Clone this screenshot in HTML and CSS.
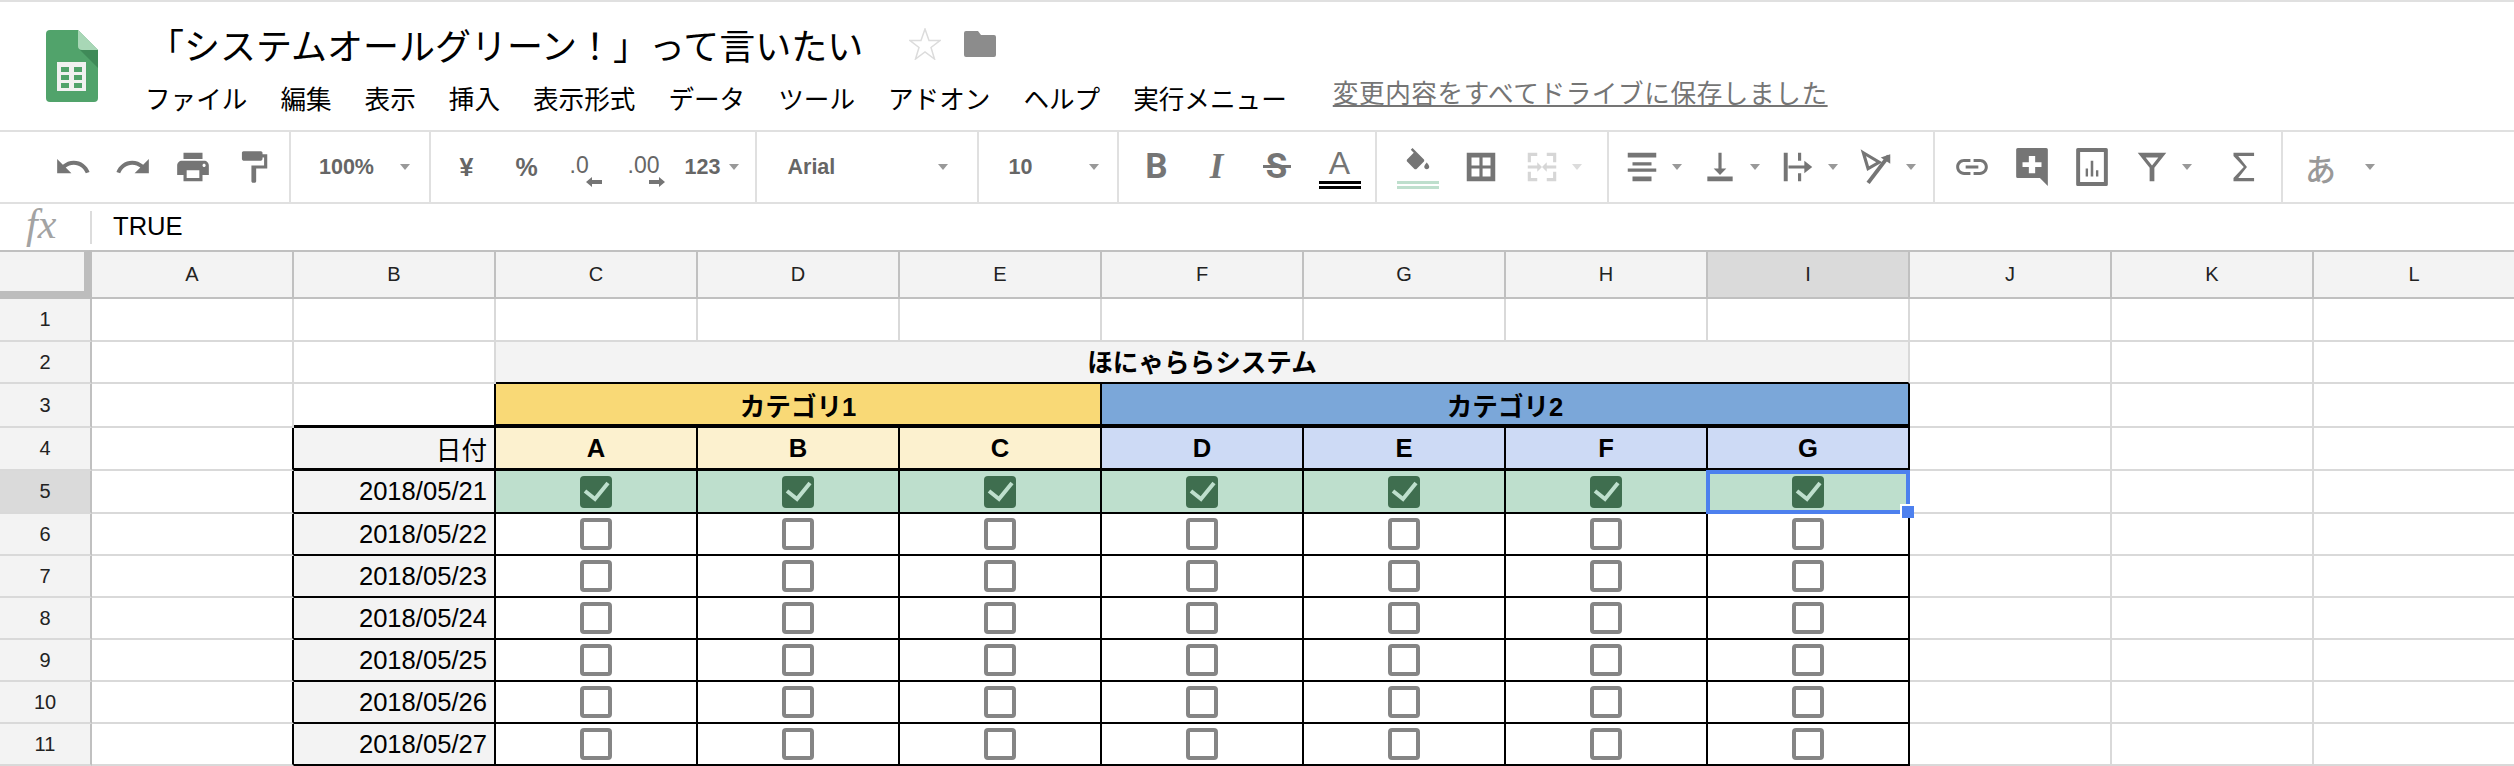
FILE: index.html
```html
<!DOCTYPE html>
<html lang="ja">
<head>
  <meta charset="UTF-8" />
  <title>「システムオールグリーン！」って言いたい</title>
  <link rel="stylesheet" href="styles.css">
</head>
<body>
  <!-- shared checkbox tick -->
  <svg class="defs" width="0" height="0"><symbol id="tick" viewBox="0 0 32 32"><path d="M5 15l10 8L28 7" fill="none" stroke="#bedfcd" stroke-width="4"/></symbol></svg>

  <header class="header">
    <svg class="logo" viewBox="0 0 52 72">
      <path d="M4 0h28l20 20v48a4 4 0 0 1-4 4H4a4 4 0 0 1-4-4V4a4 4 0 0 1 4-4z" fill="#51a36b"/>
      <path d="M32 18l20 20V20z" fill="#3f8a58"/>
      <path d="M32 0l20 20H36a4 4 0 0 1-4-4z" fill="#a8d7b6"/>
      <path d="M11 32h29v29H11z" fill="#f1f1f1"/>
      <path d="M15 37h8v5h-8zM28 37h8v5h-8zM15 45h8v5h-8zM28 45h8v5h-8zM15 53h8v5h-8zM28 53h8v5h-8z" fill="#51a36b"/>
    </svg>
    <div class="header-main">
      <div class="title-row">
        <span class="title">「システムオールグリーン！」って言いたい</span>
        <svg class="star" viewBox="0 0 32 32"><path d="M16 1l4 11.500h11l-9 7 3.500 11.500L16 24l-9.500 7L10 19.500l-9-7h11z" fill="none" stroke="#dcdcdc" stroke-width="1.500"/></svg>
        <svg class="folder" viewBox="0 0 32 26"><path d="M2 0h12l3 4h13a2 2 0 0 1 2 2v18a2 2 0 0 1-2 2H2a2 2 0 0 1-2-2V2a2 2 0 0 1 2-2z" fill="#8c8c8c"/></svg>
      </div>
      <nav class="menu">
        <span>ファイル</span><span>編集</span><span>表示</span><span>挿入</span><span>表示形式</span><span>データ</span><span>ツール</span><span>アドオン</span><span>ヘルプ</span><span>実行メニュー</span>
        <a class="saved">変更内容をすべてドライブに保存しました</a>
      </nav>
    </div>
  </header>

  <div class="toolbar">
    <div class="group g1">
      <svg class="ic" viewBox="0 0 24 24"><path d="M12.500 8c-2.650 0-5.050.99-6.900 2.600L2 7v9h9l-3.620-3.620c1.390-1.160 3.160-1.880 5.120-1.880 3.540 0 6.550 2.310 7.600 5.500l2.370-.78C21.080 11.030 17.150 8 12.500 8z"/></svg>
      <svg class="ic" viewBox="0 0 24 24"><path d="M18.400 10.600C16.550 8.990 14.150 8 11.500 8c-4.650 0-8.580 3.030-9.960 7.220L3.900 16c1.050-3.190 4.050-5.500 7.600-5.500 1.950 0 3.730.72 5.120 1.880L13 16h9V7l-3.600 3.600z"/></svg>
      <svg class="ic" viewBox="0 0 24 24"><path d="M19 8H5c-1.660 0-3 1.340-3 3v6h4v4h12v-4h4v-6c0-1.660-1.340-3-3-3zm-3 11H8v-5h8v5zm3-7c-.55 0-1-.45-1-1s.45-1 1-1 1 .45 1 1-.45 1-1 1zm-1-9H6v4h12V3z"/></svg>
      <svg class="ic" viewBox="0 0 24 24"><path d="M18 4V3c0-.55-.45-1-1-1H6c-.55 0-1 .45-1 1v4c0 .55.45 1 1 1h11c.55 0 1-.45 1-1V6h1v5h-8v10c0 .55.45 1 1 1h1c.55 0 1-.45 1-1v-8h7V4h-3z"/></svg>
    </div>
    <div class="group g2"><span class="tx w-zoom">100%</span><i class="arrow"></i></div>
    <div class="group g3">
      <span class="tx big yen">¥</span>
      <span class="tx big pct">%</span>
      <span class="dec d0"><span class="tx">.0</span><svg viewBox="0 0 16 10"><path d="M0 5l6-5v3h10v4H6v3z"/></svg></span>
      <span class="dec d00"><span class="tx">.00</span><svg viewBox="0 0 16 10"><path d="M16 5l-6-5v3H0v4h10v3z"/></svg></span>
      <span class="tx num">123</span><i class="arrow"></i>
    </div>
    <div class="group g4"><span class="tx w-font">Arial</span><i class="arrow"></i></div>
    <div class="group g5"><span class="tx w-size">10</span><i class="arrow"></i></div>
    <div class="group g6">
      <span class="glyph bold">B</span>
      <span class="glyph ital">I</span>
      <span class="glyph strike">S<i class="strike-bar"></i></span>
      <span class="glyph under"><span class="under-a">A</span><i class="bars"></i></span>
    </div>
    <div class="group g7">
      <span class="glyph under"><svg class="fill-ic" viewBox="0 0 24 24"><path d="M16.560 8.940L7.620 0 6.210 1.410l2.380 2.380-5.150 5.150c-.59.590-.59 1.540 0 2.120l5.500 5.500c.29.29.68.44 1.060.44s.77-.15 1.060-.44l5.500-5.500c.59-.58.59-1.530 0-2.120zM19 11.500s-2 2.170-2 3.500c0 1.100.9 2 2 2s2-.9 2-2c0-1.330-2-3.500-2-3.500z"/></svg><i class="bars green"></i></span>
      <svg class="ic" viewBox="0 0 24 24"><path d="M3 3v18h18V3H3zm8 15H6v-5h5v5zm0-7H6V6h5v5zm7 7h-5v-5h5v5zm0-7h-5V6h5v5z"/></svg>
      <span class="unit">
        <svg class="ic off" viewBox="0 0 24 24"><path d="M3 3h6v2H5v4H3zM15 3h6v6h-2V5h-4zM3 15h2v4h4v2H3zM19 15h2v6h-6v-2h4zM3 11h6V9l3 3-3 3v-2H3zM21 11h-6V9l-3 3 3 3v-2h6z"/></svg>
        <i class="arrow off"></i>
      </span>
    </div>
    <div class="group g8">
      <span class="unit"><svg class="ic" viewBox="0 0 24 24"><path d="M3 3h18v3H3zM6 9h12v2H6zM3 13h18v2H3zM6 18h12v3H6z"/></svg><i class="arrow"></i></span>
      <span class="unit"><svg class="ic" viewBox="0 0 24 24"><path d="M16 13h-3V3h-2v10H8l4 4 4-4zM4 18v3h16v-3H4z"/></svg><i class="arrow"></i></span>
      <span class="unit"><svg class="ic" viewBox="0 0 24 24"><path d="M3 3h2.500v18H3zM12 3h2v5h-2zM12 16h2v5h-2zM6 11h10V8l5 4-5 4v-3H6z"/></svg><i class="arrow"></i></span>
      <span class="unit"><svg class="ic" viewBox="0 0 24 24"><path d="M4 3l10 6-7 4z" fill="none" stroke="#757575" stroke-width="2"/><path d="M7 22L20 5" fill="none" stroke="#757575" stroke-width="2.500"/><path d="M15 6l6-2v6z"/></svg><i class="arrow"></i></span>
    </div>
    <div class="group g9">
      <svg class="ic" viewBox="0 0 24 24"><path d="M3.900 12c0-1.710 1.390-3.100 3.100-3.100h4V7H7c-2.760 0-5 2.240-5 5s2.240 5 5 5h4v-1.900H7c-1.710 0-3.100-1.390-3.100-3.100zM8 13h8v-2H8v2zm9-6h-4v1.900h4c1.710 0 3.100 1.390 3.100 3.100s-1.390 3.100-3.100 3.100h-4V17h4c2.760 0 5-2.240 5-5s-2.240-5-5-5z"/></svg>
      <svg class="ic" viewBox="0 0 24 24"><path fill-rule="evenodd" d="M3 0h18a1 1 0 0 1 1 1v23l-5-5H3a1 1 0 0 1-1-1V1a1 1 0 0 1 1-1zm7 5v4H6v3h4v4h4v-4h4V9h-4V5z"/></svg>
      <svg class="ic" viewBox="0 0 24 24"><path fill-rule="evenodd" d="M3 0h18a1 1 0 0 1 1 1v22a1 1 0 0 1-1 1H3a1 1 0 0 1-1-1V1a1 1 0 0 1 1-1zm1.500 2.500v19h15v-19zM8 13h1.500v5H8zM11.200 8h1.600v10h-1.600zM14.500 14h1.500v4h-1.500z"/></svg>
      <span class="unit"><svg class="ic" viewBox="0 0 24 24"><path fill-rule="evenodd" d="M3 3h18l-7.500 9.500V21h-3v-8.500zm5 3l4 5 4-5z"/></svg><i class="arrow"></i></span>
      <svg class="ic sigma" viewBox="0 0 24 24"><path d="M19 3H6v2l6.500 7L6 19v2h13v-2h-10l5.500-7L9 5h10z"/></svg>
    </div>
    <div class="group g10"><span class="tx kana">あ</span><i class="arrow"></i></div>
  </div>

  <div class="formula">
    <span class="fx">fx</span>
    <span class="formula-sep"></span>
    <span class="formula-val">TRUE</span>
  </div>

  <div class="sheet">
    <div class="corner"></div>
    <div class="ch">A</div><div class="ch">B</div><div class="ch">C</div><div class="ch">D</div><div class="ch">E</div><div class="ch">F</div><div class="ch">G</div><div class="ch">H</div><div class="ch cur">I</div><div class="ch">J</div><div class="ch">K</div><div class="ch">L</div>

    <div class="rh">1</div><div class="c"></div><div class="c"></div><div class="c"></div><div class="c"></div><div class="c"></div><div class="c"></div><div class="c"></div><div class="c"></div><div class="c"></div><div class="c"></div><div class="c"></div><div class="c"></div>

    <div class="rh">2</div><div class="c"></div><div class="c"></div>
    <div class="c title-cell">ほにゃららシステム</div>
    <div class="c"></div><div class="c"></div><div class="c"></div>

    <div class="rh">3</div><div class="c"></div><div class="c kr kb"></div>
    <div class="k thick span3 cat-a">カテゴリ1</div>
    <div class="k thick span4 cat-b">カテゴリ2</div>
    <div class="c"></div><div class="c"></div><div class="c"></div>

    <div class="rh">4</div><div class="c kr"></div>
    <div class="k head date">日付</div>
    <div class="k head sub-a">A</div><div class="k head sub-a">B</div><div class="k head sub-a">C</div>
    <div class="k head sub-b">D</div><div class="k head sub-b">E</div><div class="k head sub-b">F</div><div class="k head sub-b">G</div>
    <div class="c"></div><div class="c"></div><div class="c"></div>

    <div class="rh cur">5</div><div class="c kr"></div>
    <div class="k date">2018/05/21</div>
    <div class="k done"><span class="cb on"><svg><use href="#tick"/></svg></span></div>
    <div class="k done"><span class="cb on"><svg><use href="#tick"/></svg></span></div>
    <div class="k done"><span class="cb on"><svg><use href="#tick"/></svg></span></div>
    <div class="k done"><span class="cb on"><svg><use href="#tick"/></svg></span></div>
    <div class="k done"><span class="cb on"><svg><use href="#tick"/></svg></span></div>
    <div class="k done"><span class="cb on"><svg><use href="#tick"/></svg></span></div>
    <div class="k done selected"><span class="cb on"><svg><use href="#tick"/></svg></span><i class="sel-box"></i><i class="sel-handle"></i></div>
    <div class="c"></div><div class="c"></div><div class="c"></div>

    <div class="rh">6</div><div class="c kr"></div><div class="k date">2018/05/22</div>
    <div class="k"><span class="cb"></span></div><div class="k"><span class="cb"></span></div><div class="k"><span class="cb"></span></div><div class="k"><span class="cb"></span></div><div class="k"><span class="cb"></span></div><div class="k"><span class="cb"></span></div><div class="k"><span class="cb"></span></div>
    <div class="c"></div><div class="c"></div><div class="c"></div>

    <div class="rh">7</div><div class="c kr"></div><div class="k date">2018/05/23</div>
    <div class="k"><span class="cb"></span></div><div class="k"><span class="cb"></span></div><div class="k"><span class="cb"></span></div><div class="k"><span class="cb"></span></div><div class="k"><span class="cb"></span></div><div class="k"><span class="cb"></span></div><div class="k"><span class="cb"></span></div>
    <div class="c"></div><div class="c"></div><div class="c"></div>

    <div class="rh">8</div><div class="c kr"></div><div class="k date">2018/05/24</div>
    <div class="k"><span class="cb"></span></div><div class="k"><span class="cb"></span></div><div class="k"><span class="cb"></span></div><div class="k"><span class="cb"></span></div><div class="k"><span class="cb"></span></div><div class="k"><span class="cb"></span></div><div class="k"><span class="cb"></span></div>
    <div class="c"></div><div class="c"></div><div class="c"></div>

    <div class="rh">9</div><div class="c kr"></div><div class="k date">2018/05/25</div>
    <div class="k"><span class="cb"></span></div><div class="k"><span class="cb"></span></div><div class="k"><span class="cb"></span></div><div class="k"><span class="cb"></span></div><div class="k"><span class="cb"></span></div><div class="k"><span class="cb"></span></div><div class="k"><span class="cb"></span></div>
    <div class="c"></div><div class="c"></div><div class="c"></div>

    <div class="rh">10</div><div class="c kr"></div><div class="k date">2018/05/26</div>
    <div class="k"><span class="cb"></span></div><div class="k"><span class="cb"></span></div><div class="k"><span class="cb"></span></div><div class="k"><span class="cb"></span></div><div class="k"><span class="cb"></span></div><div class="k"><span class="cb"></span></div><div class="k"><span class="cb"></span></div>
    <div class="c"></div><div class="c"></div><div class="c"></div>

    <div class="rh">11</div><div class="c kr"></div><div class="k date">2018/05/27</div>
    <div class="k"><span class="cb"></span></div><div class="k"><span class="cb"></span></div><div class="k"><span class="cb"></span></div><div class="k"><span class="cb"></span></div><div class="k"><span class="cb"></span></div><div class="k"><span class="cb"></span></div><div class="k"><span class="cb"></span></div>
    <div class="c"></div><div class="c"></div><div class="c"></div>
  </div>
</body>
</html>
```

FILE: styles.css
```css
:root {
  --line: #d9d9d9;
  --head-line: #c0c0c0;
  --head: #f3f3f3;
  --icon: #757575;
  --blue: #4d80ee;
}
* {
  box-sizing: border-box;
}
html, body {
  height: 766px;
  overflow: hidden;
}
body {
  margin: 0;
  font-family: "Liberation Sans", "Noto Sans CJK JP", sans-serif;
  color: #000;
  background: #fff;
}
.defs {
  position: absolute;
}

/* title + menu */
.header {
  height: 132px;
  display: flex;
  border-top: 2px solid #e0e0e0;
  border-bottom: 2px solid #e0e0e0;
}
.logo {
  width: 52px;
  height: 72px;
  margin: 28px 0 0 46px;
}
.header-main {
  margin-left: 47px;
  padding-top: 20px;
}
.title-row {
  display: flex;
  align-items: center;
  height: 44px;
}
.title {
  font-size: 36px;
  margin-left: 3px;
  font-family: "Noto Sans CJK JP", sans-serif;
  font-weight: 400;
  white-space: nowrap;
}
.star {
  width: 32px;
  height: 32px;
  margin-left: 46px;
}
.folder {
  width: 32px;
  height: 26px;
  margin-left: 23px;
}
.menu {
  display: flex;
  align-items: center;
  gap: 33px;
  margin-top: 17px;
  font-size: 25.600px;
  font-family: "Noto Sans CJK JP", sans-serif;
  font-weight: 400;
  line-height: 30px;
  white-space: nowrap;
}
.saved {
  margin: -13px 0 0 13px;
  color: #757575;
  text-decoration: underline;
  text-underline-offset: 2px;
  letter-spacing: .6px;
}

/* toolbar */
.toolbar {
  height: 72px;
  display: flex;
  border-bottom: 2px solid #e0e0e0;
}
.group {
  display: flex;
  align-items: center;
  gap: 22px;
  border-right: 2px solid #e0e0e0;
  flex: none;
}
.g1 { width: 291px; padding-left: 54px; }
.g2 { width: 139.500px; padding-left: 28px; gap: 0; }
.g3 { width: 326px; padding-left: 29px; gap: 0; }
.g4 { width: 222px; padding-left: 31px; gap: 0; }
.g5 { width: 140px; padding-left: 30px; gap: 0; }
.g6 { width: 258px; padding-left: 8px; gap: 0; }
.g7 { width: 232.500px; padding-left: 20px; gap: 23px; }
.g8 { width: 326px; padding-left: 14px; gap: 19px; }
.g9 { width: 348px; padding-left: 18px; }
.g10 { padding-left: 22px; gap: 0; border-right: 0; }
.ic {
  width: 38px;
  height: 38px;
  fill: var(--icon);
  flex: none;
}
.ic.off {
  fill: #d6d6d6;
}
.sigma {
  margin-left: 10px;
}
.unit {
  display: flex;
  align-items: center;
  gap: 11px;
}
.arrow {
  display: block;
  flex: none;
  width: 0;
  height: 0;
  border-left: 5px solid transparent;
  border-right: 5px solid transparent;
  border-top: 6px solid #999;
}
.arrow.off {
  border-top-color: #dcdcdc;
}
.tx {
  font-size: 21.500px;
  font-weight: 700;
  color: #666;
  white-space: nowrap;
}
.tx.big {
  font-size: 25px;
}
.w-zoom { width: 81px; }
.w-font { width: 150px; }
.w-size { width: 80px; }
.yen { width: 56px; }
.pct { width: 54px; }
.dec {
  display: flex;
  flex-direction: column;
  height: 34px;
  margin-top: 8px;
}
.dec .tx {
  font-size: 23px;
  font-weight: 400;
  line-height: 22px;
}
.dec svg {
  align-self: flex-end;
  width: 16px;
  height: 10px;
  margin-top: 1px;
  fill: var(--icon);
}
.d0 { width: 32px; margin-right: 26px; }
.d00 { width: 37px; margin-right: 18px; }
.num { width: 46px; padding-left: 2px; }
.kana {
  width: 60px;
  font-size: 31px;
  font-weight: 500;
  color: #999;
  font-family: "Noto Sans CJK JP", sans-serif;
}
.glyph {
  position: relative;
  width: 60px;
  text-align: center;
  color: var(--icon);
  line-height: 38px;
}
.bold {
  font-size: 35px;
  font-weight: 700;
  font-family: Roboto, sans-serif;
}
.ital {
  font-size: 35px;
  font-weight: 700;
  font-style: italic;
  font-family: "Liberation Serif", serif;
}
.strike {
  font-size: 35px;
  font-weight: 700;
  font-family: Roboto, sans-serif;
}
.strike-bar {
  position: absolute;
  left: 16px;
  top: 17px;
  width: 28px;
  height: 3px;
  background: var(--icon);
}
.under {
  display: flex;
  flex-direction: column;
  align-items: center;
  height: 42px;
  margin-top: 4px;
}
.g6 .under {
  margin-left: 3px;
}
.g7 .under {
  width: 42px;
}
.under-a {
  font-size: 32px;
  line-height: 30px;
  height: 30px;
}
.fill-ic {
  width: 32px;
  height: 30px;
  fill: var(--icon);
}
.bars {
  display: block;
  flex: none;
  width: 42px;
  height: 8px;
  margin-top: 3px;
  border-top: 3px solid #000;
  border-bottom: 3px solid #000;
}
.bars.green {
  border-color: #bedfcd;
}

/* formula bar */
.formula {
  height: 46px;
  display: flex;
  align-items: center;
}
.fx {
  width: 90px;
  padding: 0 0 6px 26px;
  font: italic 42px "Liberation Serif", serif;
  color: #a3a3a3;
}
.formula-sep {
  width: 2px;
  height: 33px;
  background: #dcdcdc;
}
.formula-val {
  margin: -2px 0 0 21px;
  font-size: 25.600px;
}

/* grid */
.sheet {
  display: grid;
  grid-template-columns: 92px repeat(12, 202px);
  grid-template-rows: 49px 43px 42px 44px 43px 43px 42px 42px 42px 42px 42px 42px;
}
.corner {
  background: var(--head);
  border-top: 2px solid var(--head-line);
  border-right: 8px solid #bdbdbd;
  border-bottom: 8px solid #bdbdbd;
}
.ch {
  display: flex;
  align-items: center;
  justify-content: center;
  font-size: 20px;
  color: #222;
  background: var(--head);
  border-top: 2px solid var(--head-line);
  border-right: 2px solid var(--head-line);
  border-bottom: 2px solid var(--head-line);
}
.rh {
  display: flex;
  align-items: center;
  justify-content: center;
  font-size: 20px;
  color: #222;
  background: var(--head);
  border-right: 2px solid var(--head-line);
  border-bottom: 2px solid var(--line);
}
.ch.cur, .rh.cur {
  background: #dadada;
}
.c {
  border-right: 2px solid var(--line);
  border-bottom: 2px solid var(--line);
}
.c.kr {
  border-right-color: #000;
}
.c.kb {
  border-bottom: 3px solid #000;
}
.title-cell {
  grid-column: span 7;
  display: flex;
  align-items: center;
  justify-content: center;
  padding-bottom: 3px;
  font-size: 25.600px;
  font-weight: 700;
  background: var(--head);
  border-bottom-color: #000;
}
.k {
  display: flex;
  align-items: center;
  justify-content: center;
  border-right: 2px solid #000;
  border-bottom: 2px solid #000;
  font-size: 25.600px;
}
.thick {
  border-bottom-width: 4px;
  font-weight: 700;
}
.head {
  border-bottom-width: 3px;
  font-weight: 700;
}
.span3 { grid-column: span 3; }
.span4 { grid-column: span 4; }
.cat-a { background: #f9d976; }
.cat-b { background: #7ba7d9; }
.sub-a { background: #fcf1cf; }
.sub-b { background: #cddaf5; }
.date {
  justify-content: flex-end;
  padding-right: 7px;
  background: var(--head);
  font-weight: 400;
}
.done {
  background: #bedfcd;
}
.cb {
  display: block;
  width: 32px;
  height: 32px;
  border: 4px solid #858585;
  border-radius: 4px;
}
.cb.on {
  border: 0;
  background: #3f6e4f;
}
.cb svg {
  display: block;
  width: 32px;
  height: 32px;
}
.selected {
  position: relative;
}
.sel-box {
  position: absolute;
  left: -2px;
  top: -1px;
  right: -2px;
  bottom: -2px;
  border: 4px solid var(--blue);
}
.sel-handle {
  position: absolute;
  right: -6px;
  bottom: -6px;
  width: 14px;
  height: 14px;
  background: var(--blue);
  border-left: 2px solid #fff;
  border-top: 2px solid #fff;
}
```
